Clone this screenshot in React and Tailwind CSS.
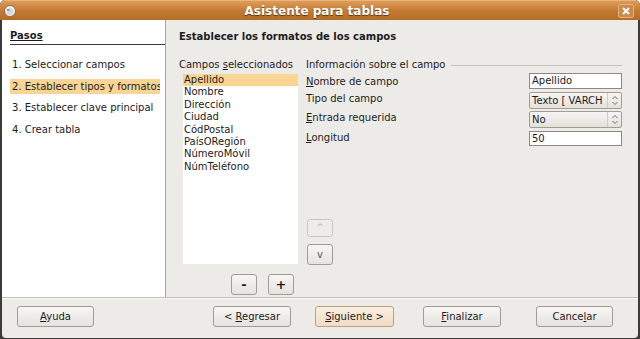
import React from "react";

const font = { fontFamily: '"DejaVu Sans", Verdana, sans-serif' };

function Btn({ children, className = "", hot = false }) {
  return (
    <div
      className={`h-[21px] flex items-center justify-center rounded-[3px] border text-[10px] text-[#1c1c1c] ${
        hot
          ? "border-[#b8a286] bg-gradient-to-b from-[#fbefe1] to-[#f1dcc3]"
          : "border-[#a19d96] bg-gradient-to-b from-[#f7f6f4] to-[#e6e3df]"
      } ${className}`}
    >
      {children}
    </div>
  );
}

function Spin() {
  return (
    <div className="h-full w-[14px] border-l border-[#cfcbc5] flex items-center justify-center">
      <svg width="8" height="11" viewBox="0 0 8 11" fill="none" stroke="#6f6c67" strokeWidth="1">
        <path d="M1.5 4 L4 1.5 L6.5 4" />
        <path d="M1.5 7 L4 9.5 L6.5 7" />
      </svg>
    </div>
  );
}

export default function App() {
  const fields = ["Apellido", "Nombre", "Dirección", "Ciudad", "CódPostal", "PaísORegión", "NúmeroMóvil", "NúmTeléfono"];
  const steps = ["Seleccionar campos", "Establecer tipos y formatos", "Establecer clave principal", "Crear tabla"];

  return (
    <div className="w-[640px] h-[339px] flex flex-col bg-[#3c3b37] rounded-t-[5px] overflow-hidden" style={font}>
      {/* title bar */}
      <div className="h-[20px] flex items-center px-[4px] bg-gradient-to-b from-[#dd9d57] via-[#c57b34] to-[#b36c27] rounded-t-[5px] border-t border-[#e9b57c]">
        <svg width="12" height="12" viewBox="0 0 12 12">
          <circle cx="6" cy="6" r="5.5" fill="#f3f3f3" stroke="#7a5a3a" strokeWidth="0.8" />
          <circle cx="6" cy="6.5" r="3.5" fill="#d8d8d8" />
          <path d="M3 5 L5.5 5" stroke="#555" strokeWidth="1" />
        </svg>
        <div className="flex-1 text-center text-white font-bold text-[12px] [text-shadow:0_1px_1px_#5a3210]">
          Asistente para tablas
        </div>
        <div className="w-[16px] h-[14px] mr-[2px] rounded-[2px] border border-[#e8b27a] bg-[#c88a4d] flex items-center justify-center">
          <svg width="8" height="8" viewBox="0 0 8 8" stroke="white" strokeWidth="2">
            <path d="M1 1 L7 7 M7 1 L1 7" />
          </svg>
        </div>
      </div>

      {/* body */}
      <div className="flex-1 flex flex-col mx-[2px] mb-[1px] bg-[#edebe8] rounded-b-[4px]">
        <div className="h-[277px] flex">
          {/* steps */}
          <div className="w-[164px] bg-white border-r border-[#a8a49d] pt-[10px] text-[#1c1c1c]">
            <div className="ml-[8px] pb-[2px] border-b border-[#3a3a3a] font-bold text-[10px] leading-[12px]">
              <span className="underline underline-offset-[1px]">Pasos</span>
            </div>
            <div className="mt-[12px] flex flex-col gap-[6.6px] ml-[8px] text-[10px]">
              {steps.map((s, i) => (
                <div
                  key={s}
                  className={`h-[15px] w-[150px] leading-[15px] pl-[2px] whitespace-nowrap overflow-hidden ${
                    i === 1 ? "bg-[#f9d595]" : ""
                  }`}
                >
                  {i + 1}. {s}
                </div>
              ))}
            </div>
          </div>

          {/* main */}
          <div className="flex-1 pl-[13px] pt-[11px] text-[#1c1c1c] text-[10px]">
            <div className="font-bold text-[10px] leading-[12px]">Establecer los formatos de los campos</div>
            <div className="flex mt-[16px]">
              <div className="w-[127px] flex flex-col">
                <div className="leading-[12px]">
                  Campos <span className="underline">s</span>eleccionados
                </div>
                <div className="ml-[4px] mt-[3px] w-[115px] h-[190px] bg-white">
                  {fields.map((f, i) => (
                    <div
                      key={f}
                      className={`h-[12.4px] leading-[12.4px] pl-[1px] ${i === 0 ? "bg-[#f9d595]" : ""}`}
                    >
                      {f}
                    </div>
                  ))}
                </div>
                <div className="flex gap-[11px] mt-[10px] ml-[52px]">
                  <Btn className="w-[26px] h-[19px] text-[13px] font-bold">-</Btn>
                  <Btn className="w-[26px] h-[19px] text-[13px] font-bold">+</Btn>
                </div>
              </div>

              <div className="flex-1 pr-[16px]">
                <div className="flex items-center leading-[12px]">
                  <span>Información sobre el campo</span>
                  <div className="flex-1 ml-[6px] h-[1px] bg-[#c7c3bc]" />
                </div>
                <div className="flex flex-col gap-[3px] mt-[2px]">
                  <div className="flex items-center h-[16px]">
                    <span className="flex-1"><span className="underline">N</span>ombre de campo</span>
                    <div className="w-[93px] h-[16px] bg-white border border-[#8d8a85] px-[2px] leading-[14px]">Apellido</div>
                  </div>
                  <div className="flex items-center h-[16px]">
                    <span className="flex-1 -mt-[3px]">Tipo del campo</span>
                    <div className="w-[93px] h-[17px] flex bg-gradient-to-b from-[#f6f5f3] to-[#e4e1dc] border border-[#a19d96] rounded-[2px]">
                      <span className="w-[77px] pl-[2px] leading-[15px] whitespace-nowrap overflow-hidden">Texto [ VARCH</span>
                      <Spin />
                    </div>
                  </div>
                  <div className="flex items-center h-[16px]">
                    <span className="flex-1 -mt-[3px]"><span className="underline">E</span>ntrada requerida</span>
                    <div className="w-[93px] h-[17px] flex bg-gradient-to-b from-[#f6f5f3] to-[#e4e1dc] border border-[#a19d96] rounded-[2px]">
                      <span className="w-[77px] pl-[2px] leading-[15px]">No</span>
                      <Spin />
                    </div>
                  </div>
                  <div className="flex items-center h-[16px]">
                    <span className="flex-1 -mt-[2px]"><span className="underline">L</span>ongitud</span>
                    <div className="w-[93px] h-[15px] bg-white border border-[#8d8a85] px-[2px] leading-[13px]">50</div>
                  </div>
                </div>
                <div className="flex flex-col gap-[7px] mt-[73px] ml-[1px]">
                  <div className="w-[26px] h-[18px] rounded-[3px] border border-[#c9c5bf] bg-[#eeecea] flex items-center justify-center text-[9px] text-[#b5b2ad]">^</div>
                  <Btn className="w-[26px] h-[18px] text-[9px] text-[#3d5a8a]">v</Btn>
                </div>
              </div>
            </div>
          </div>
        </div>

        {/* separator */}
        <div className="h-[2px] border-t border-[#c2beb8] bg-white/60" />

        {/* buttons */}
        <div className="flex items-center pt-[7px] pl-[15px]">
          <Btn className="w-[77px]"><span><span className="underline">A</span>yuda</span></Btn>
          <Btn className="w-[78px] ml-[119px]"><span>&lt; <span className="underline">R</span>egresar</span></Btn>
          <Btn hot className="w-[79px] ml-[24px]"><span><span className="underline">S</span>iguiente &gt;</span></Btn>
          <Btn className="w-[78px] ml-[29px]"><span><span className="underline">F</span>inalizar</span></Btn>
          <Btn className="w-[77px] ml-[35px]"><span>Cance<span className="underline">l</span>ar</span></Btn>
        </div>
      </div>
    </div>
  );
}
